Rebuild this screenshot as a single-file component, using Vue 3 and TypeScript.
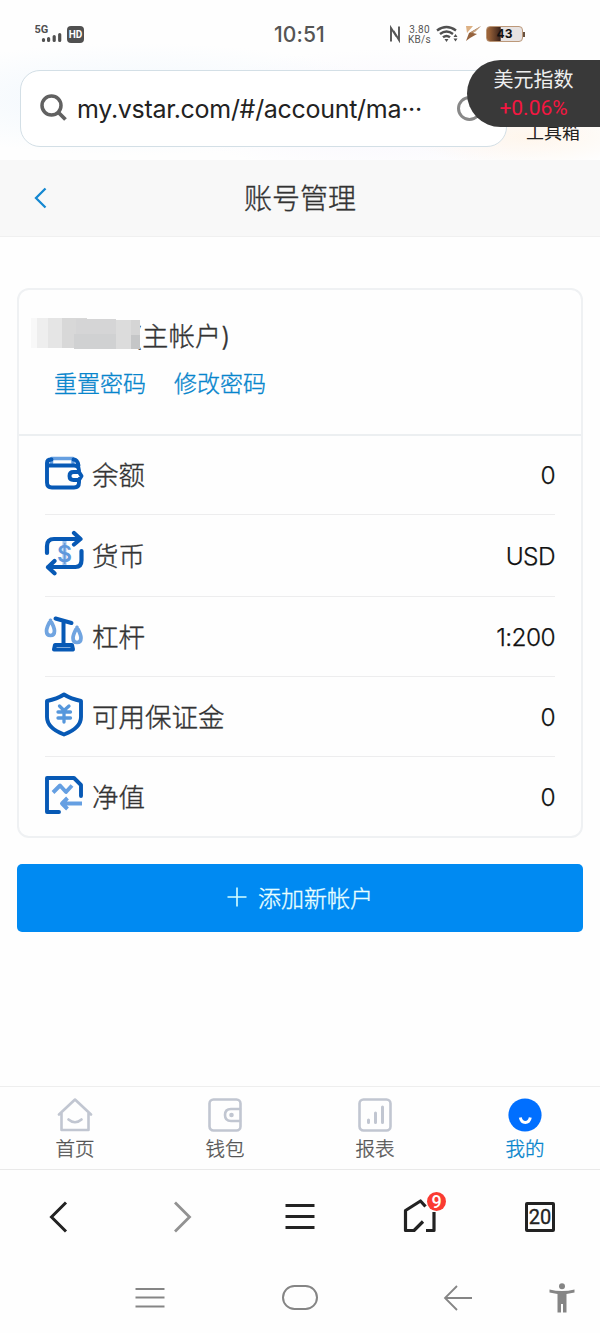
<script setup lang="ts">
interface Row { key: string; label: string; value: string }
const rows: Row[] = [
  { key: 'balance', label: '余额', value: '0' },
  { key: 'currency', label: '货币', value: 'USD' },
  { key: 'leverage', label: '杠杆', value: '1:200' },
  { key: 'margin', label: '可用保证金', value: '0' },
  { key: 'equity', label: '净值', value: '0' },
]
const tabs = [
  { key: 'home', label: '首页' },
  { key: 'wallet', label: '钱包' },
  { key: 'report', label: '报表' },
  { key: 'mine', label: '我的' },
]
const active = 'mine'
</script>

<template>
  <div class="screen">
    <header class="top">
      <div class="status">
        <div class="status-left">
          <svg width="30" height="22" viewBox="0 0 30 22">
            <text x="-.5" y="10" class="net">5G</text>
            <path d="M8.500 16.500v1M13.600 15.500v2M19.200 13.500v4M24.700 11.500v6" stroke="#505050" stroke-width="3.200" stroke-linecap="round" />
          </svg>
          <span class="hd">HD</span>
        </div>
        <span class="clock">10:51</span>
        <div class="status-right">
          <svg class="nfc" width="12" height="18" viewBox="0 0 12 18"><path d="M2 16.500V3l5.500 8.500M4.500 6L10 15V1.500" fill="none" stroke="#555" stroke-width="1.900" /></svg>
          <span class="speed"><span>3.80</span><span>KB/s</span></span>
          <svg class="wifi" width="23" height="18" viewBox="0 0 23 18">
            <path d="M1 5.500Q10.500-1.500 20 5.500M4 9Q10.500 4 17 9M7 12.300q3.500-2.800 7 0" fill="none" stroke="#505050" stroke-width="2.400" />
            <path d="M8.500 14h4l-2 3zM17.500 12l2-3 2 3zM17.500 13.500h4l-2 3z" fill="#505050" />
          </svg>
          <svg class="bolt" width="20" height="18" viewBox="0 0 20 18">
            <path d="M3 1h7L4 8z" fill="#ddb184" /><path d="M18 1L6 8l-3 8 4-3 7-4-4-1z" fill="#95633e" /><path d="M18 1L7 8l5-1z" fill="#cba783" />
          </svg>
          <span class="battery"><span>43</span></span>
        </div>
      </div>
      <div class="address">
        <svg class="search" width="28" height="28" viewBox="0 0 28 28"><circle cx="11.500" cy="11.500" r="9.500" fill="none" stroke="#616161" stroke-width="3.500" /><path d="M18 18l7.500 7.500" stroke="#616161" stroke-width="3.800" /></svg>
        <span class="url">my.vstar.com/#/account/ma<i>···</i></span>
        <span class="reload"></span>
      </div>
      <span class="toolbox">工具箱</span>
      <aside class="ticker"><span>美元指数</span><b>+0.06%</b></aside>
    </header>

    <div class="title-bar">
      <svg class="back" width="13" height="22" viewBox="0 0 13 22"><path d="M11.500 1.500L2 11l9.500 9.500" fill="none" stroke="#1588d1" stroke-width="2.300" /></svg>
      <h1>账号管理</h1>
    </div>

    <main>
      <section class="card">
        <div class="card-head">
          <div class="account">
            <svg class="mosaic" width="112" height="34" viewBox="0 0 112 34">
              <path d="M2 1h12v30H2z" fill="#f8f8f8" /><path d="M8 1h11v30H8z" fill="#eee" /><path d="M19 1h14v30H19z" fill="#e5e5e5" />
              <path d="M33 1h25v1h18v30H47v-1H33z" fill="#d8d8d8" /><path d="M47 2h40v15H47z" fill="#d5d5d6" /><path d="M45 17h42v15H45z" fill="#d0d1d2" />
              <path d="M87 3h15v29H87z" fill="#dcdcdc" /><path d="M102 3h9v15h-9z" fill="#d5d5d5" /><path d="M102 18h9v14h-9z" fill="#c5c6c7" />
            </svg>
            <span class="account-type"><span class="paren">(</span>主帐户)</span>
          </div>
          <div class="links"><a>重置密码</a><a>修改密码</a></div>
        </div>
        <ul class="rows">
          <li v-for="row in rows" :key="row.key" :class="row.key">
            <svg class="row-icon" width="40" height="46" viewBox="0 0 40 46" fill="none" stroke="#0759b5" stroke-width="3.900" stroke-linejoin="round" stroke-linecap="round">
              <template v-if="row.key === 'balance'">
                <path d="M7.500 13V8.500H29V13" stroke="#669fe0" stroke-width="3.500" />
                <path d="M3 13v19.500q0 5 5 5h22q5 0 5-5v-3M3 13q0-3.500 4.500-3.500M3 13q0 2.500 4 2.500h23q5 0 5 5M29.500 9.500q4 0 5 6" />
                <path d="M35 22h-5.500q-4 0-4 4t4 4H35l2.500-4z" />
              </template>
              <template v-else-if="row.key === 'currency'">
                <path d="M20.500 11v25" stroke="#9fc2eb" stroke-width="4" /><text x="20.500" y="31.500" class="dollar">$</text>
                <path d="M3 23v-7q0-7 7-7h26M30 3l6.500 6-6.500 5.500M37.500 21v9q0 7-6 7H4M10.500 31L4 37.300l6.500 6" stroke-width="4.200" />
              </template>
              <template v-else-if="row.key === 'leverage'">
                <path d="M6.500 9.500q-4 7-4 10.500 0 4.500 4 4.500t4-4.500q0-3.500-4-10.500M33 16.500q-4 7-4 10.500 0 4.500 4 4.500t4-4.500q0-3.500-4-10.500" stroke="#70a4e0" stroke-width="3.700" />
                <path d="M11.500 7.500l16 4.500M19.500 10v23M11 34h17l1 4.500H10z" stroke-width="4" />
              </template>
              <template v-else-if="row.key === 'margin'">
                <path d="M20 3.500Q27 8 37 10v16q0 11-17 17.500Q3 37 3 26V10q10-2 17-6.500z" />
                <path d="M15.500 15l4.500 4.500 5-4.500M14 21h12.500M14 27h12.500M20 19v12" stroke="#5697dc" stroke-width="3.300" />
              </template>
              <template v-else>
                <path d="M15 40H3V6h27l7 7v11M3 6v34" /><path d="M9 20.500l7-7 6 6.500 6-6.500M38 31.500H18M23.500 26L18 31.500l5.500 5.500" stroke="#659fe2" stroke-linecap="butt" />
              </template>
            </svg>
            <span class="label">{{ row.label }}</span><span class="value">{{ row.value }}</span>
          </li>
        </ul>
      </section>
      <button class="add"><svg width="20" height="20" viewBox="0 0 20 20"><path d="M10 .5v19M.5 10h19" stroke="#d5ffff" stroke-width="1.600" /></svg><span>添加新帐户</span></button>
    </main>

    <nav class="tabs">
      <a v-for="tab in tabs" :key="tab.key" :class="{ active: tab.key === active }">
        <svg width="36" height="34" viewBox="0 0 36 34" fill="none" stroke="#c1c6d1" stroke-width="2.600" stroke-linejoin="round" stroke-linecap="round">
          <template v-if="tab.key === 'home'"><path d="M2 16.500L18 1.500l16 15M4.500 15v17h27V15M11.500 21.500q6.500 5.500 13 0" /></template>
          <template v-else-if="tab.key === 'wallet'"><rect x="2.500" y="1.500" width="31" height="31" rx="4" /><path d="M33 11h-9q-6 0-6 6t6 6h9" /><circle cx="24.500" cy="17" r="2.300" fill="#c1c6d1" stroke="none" /></template>
          <template v-else-if="tab.key === 'report'"><rect x="2.500" y="1.500" width="31" height="31" rx="4" /><path d="M11.500 22v2.500M18.500 15v9.500M25.500 9v15.500" stroke-width="3" /></template>
          <template v-else><circle cx="18" cy="17" r="16.600" fill="#006fff" stroke="none" /><path d="M13.300 19.500q1 5 5 5t5-5" stroke="#fff" stroke-width="3" stroke-linecap="butt" /></template>
        </svg>
        <span>{{ tab.label }}</span>
      </a>
    </nav>

    <nav class="browser">
      <div><svg class="prev" width="20" height="32" viewBox="0 0 20 32"><path d="M18 1.500L3.500 16 18 30.500" fill="none" stroke="#222" stroke-width="3" /></svg></div>
      <div><svg class="next" width="20" height="32" viewBox="0 0 20 32"><path d="M3 1.500L17.500 16 3 30.500" fill="none" stroke="#929292" stroke-width="2.800" /></svg></div>
      <div><svg width="30" height="28" viewBox="0 0 30 28"><path d="M.5 2.500h29M.5 13.500h29M.5 24.500h29" stroke="#222" stroke-width="3" /></svg></div>
      <div class="home">
        <svg width="34" height="36" viewBox="0 0 34 36"><path d="M22.500 9.500L17.500 4 2.500 13.500v20H11l9-9M31 15v18.500h-8" fill="none" stroke="#222" stroke-width="3.200" stroke-linejoin="round" /></svg>
        <span class="badge">9</span>
      </div>
      <div><span class="pages">20</span></div>
    </nav>

    <nav class="system">
      <svg class="recent" width="30" height="22" viewBox="0 0 30 22"><path d="M.5 2h29M.5 10.500h29M.5 19.500h29" stroke="#858585" stroke-width="1.800" /></svg>
      <span class="home-key"></span>
      <svg class="arrow" width="30" height="26" viewBox="0 0 30 26"><path d="M14 1L2 13l12 12M2 13h27" fill="none" stroke="#858585" stroke-width="1.800" /></svg>
      <svg class="person" width="26" height="30" viewBox="0 0 26 30" fill="#858585"><circle cx="13" cy="3.200" r="3" /><path d="M.5 6.500q12.500 3 25 0v3L17.500 11v18.500H14V21h-2v8.500H8.500V11L.5 9.500z" /></svg>
    </nav>
  </div>
</template>

<style>
body { margin: 0; background: #fdfdfd; }
</style>
<style scoped>
* { box-sizing: border-box; }
.screen { width: 600px; height: 1333px; display: flex; flex-direction: column; overflow: hidden; background: #fefefe; color: #333; font-family: Inter, "Noto Sans CJK SC", sans-serif; font-weight: 300; }
svg { display: block; flex: none; }
.top { position: relative; height: 160px; flex: none; background: radial-gradient(ellipse at 23% 62%, #f0f7fd 0%, transparent 40%), radial-gradient(ellipse at 88% 85%, #fff6ec 0%, transparent 16%), radial-gradient(ellipse at 65% 70%, #f7f5fd 0%, transparent 40%), #fefefe; }
.status { height: 70px; padding: 0 74px 2px 35px; display: grid; grid-template-columns: 239px 60px 1fr; align-items: center; }
.status-left { display: flex; gap: 2px; align-items: center; }
.net { font: 700 11px Roboto; fill: #505050; }
.hd { width: 17px; height: 17px; border-radius: 4px; background: #505050; color: #fff; font: 700 10px/17px Roboto; text-align: center; }
.clock { font-size: 21px; font-weight: 500; color: #555; letter-spacing: .1px; white-space: nowrap; }
.status-right { display: flex; align-items: center; margin-left: 55px; }
.speed { display: grid; grid-template-rows: 10px 9px; width: 23px; margin-left: 7px; font-family: Roboto; font-size: 10px; line-height: 9px; letter-spacing: .3px; font-weight: 400; color: #555; text-align: center; }
.wifi { margin-left: 5px; }
.bolt { margin-left: 4px; }
.battery { position: relative; flex: none; width: 37px; height: 16px; border: 1px solid #bc9879; border-radius: 4px; margin-left: 3px; background: linear-gradient(90deg, #9b6339 0 5%, #3b241c 38%, #e7e2e1 40%); color: #111; font: 700 12px/14px Inter; text-align: center; }
.battery::after { content: ""; position: absolute; right: -3px; top: 5px; width: 2px; height: 5px; background: #66503f; }
.address { width: 487px; height: 77px; margin-left: 20px; border: 1px solid #d3dfe6; border-radius: 20px; background: #fff; display: flex; align-items: center; padding-left: 19px; }
.search { margin-top: -1px; }
.url { margin-left: 9px; width: 380px; color: #222; font-size: 25px; letter-spacing: -.3px; font-weight: 400; white-space: nowrap; }
.url i { font-style: normal; }
.reload { width: 25px; height: 25px; border: 3px solid #888; border-radius: 50%; flex: none; }
.toolbox { position: absolute; left: 526px; top: 119px; font-size: 18px; line-height: 27px; color: #222; font-weight: 400; }
.ticker { position: absolute; right: 0; top: 60px; width: 133px; height: 67px; border-radius: 34px 0 0 34px; background: #393939; color: #eee; display: flex; flex-direction: column; align-items: center; font-size: 20px; line-height: 28px; padding-top: 6px; font-weight: 400; }
.ticker b { font-family: Roboto, sans-serif; font-weight: 400; font-size: 21px; color: #f41641; }
.title-bar { height: 77px; flex: none; background: #f8f8f8; border-bottom: 1px solid #f0f0f0; display: grid; grid-template-columns: 13px 1fr 13px; align-items: center; padding: 0 34px; }
h1 { margin: 2px 0 0; font-size: 28px; font-weight: 300; line-height: 40px; text-align: center; }
h1, .account, .links, .label, .add span, .tabs span { -webkit-text-stroke: .35px currentColor; }
main { height: 849px; flex: none; padding: 51px 17px 0; }
.card { height: 550px; border: 2px solid #eff1f3; border-radius: 12px; background: #fefefe; }
.card-head { height: 146px; border-bottom: 2px solid #eceff1; padding-top: 24px; }
.account { display: flex; align-items: center; height: 40px; padding-left: 10px; font-size: 26px; }
.mosaic { z-index: 1; margin-top: -1px; }
.account-type { margin-left: -8px; white-space: nowrap; letter-spacing: .3px; }
.links { display: flex; gap: 28px; padding-left: 35px; margin-top: 12px; color: #0785cc; font-size: 23px; line-height: 36px; }
.rows { list-style: none; margin: 0; padding: 0 26px; }
.rows li { display: flex; align-items: center; height: 80px; border-bottom: 1px solid #ededee; }
.rows li:first-child { height: 79px; }
.rows .currency { height: 82px; }
.rows .equity { border: 0; }
.row-icon { margin: -5px 0 0 -1px; }
.dollar { font: 600 23px Inter; text-anchor: middle; fill: #5f98dc; stroke: none; }
.label { margin-left: 8px; font-size: 26.5px; line-height: 40px; }
.value { margin-left: auto; color: #111; font-size: 24.5px; font-weight: 300; letter-spacing: -.6px; -webkit-text-stroke: .25px currentColor; }
.add { width: 566px; height: 68px; margin: 26px 0 0; padding: 0 0 2px; border: 0; border-radius: 5px; background: #008af2; color: #e9ffff; display: flex; align-items: center; justify-content: center; gap: 11px; font: 300 23px "Noto Sans CJK SC", sans-serif; }
.tabs { height: 84px; flex: none; border-top: 1px solid #eee; border-bottom: 1px solid #e9e9e9; display: grid; grid-template-columns: repeat(4, 1fr); }
.tabs a { display: flex; flex-direction: column; align-items: center; padding-top: 11px; font-size: 19.5px; line-height: 28px; color: #555; }
.tabs span { margin-top: 3px; }
.tabs .active { color: #0785cc; }
.browser { height: 93px; flex: none; display: grid; grid-template-columns: repeat(5, 120px); }
.browser > div { position: relative; display: flex; align-items: center; justify-content: center; }
.prev { margin-right: 4px; }
.next { margin-left: 3px; }
.home svg { margin-top: -3px; }
.badge { position: absolute; left: 67px; top: 22px; width: 19px; height: 19px; border-radius: 50%; background: #fa3b32; color: white; font: 500 18px/19px Roboto; text-align: center; }
.pages { width: 30px; height: 30px; border: 3px solid #222; border-radius: 2px; color: #222; font: 400 20px/25px Roboto; -webkit-text-stroke: .3px currentColor; display: flex; justify-content: center; }
.system { height: 69px; flex: none; display: flex; align-items: center; padding-left: 135px; }
.home-key { width: 36px; height: 25px; border: 2px solid #858585; border-radius: 13px; margin-left: 117px; }
.arrow { margin-left: 125px; }
.person { margin-left: 76px; }
</style>
